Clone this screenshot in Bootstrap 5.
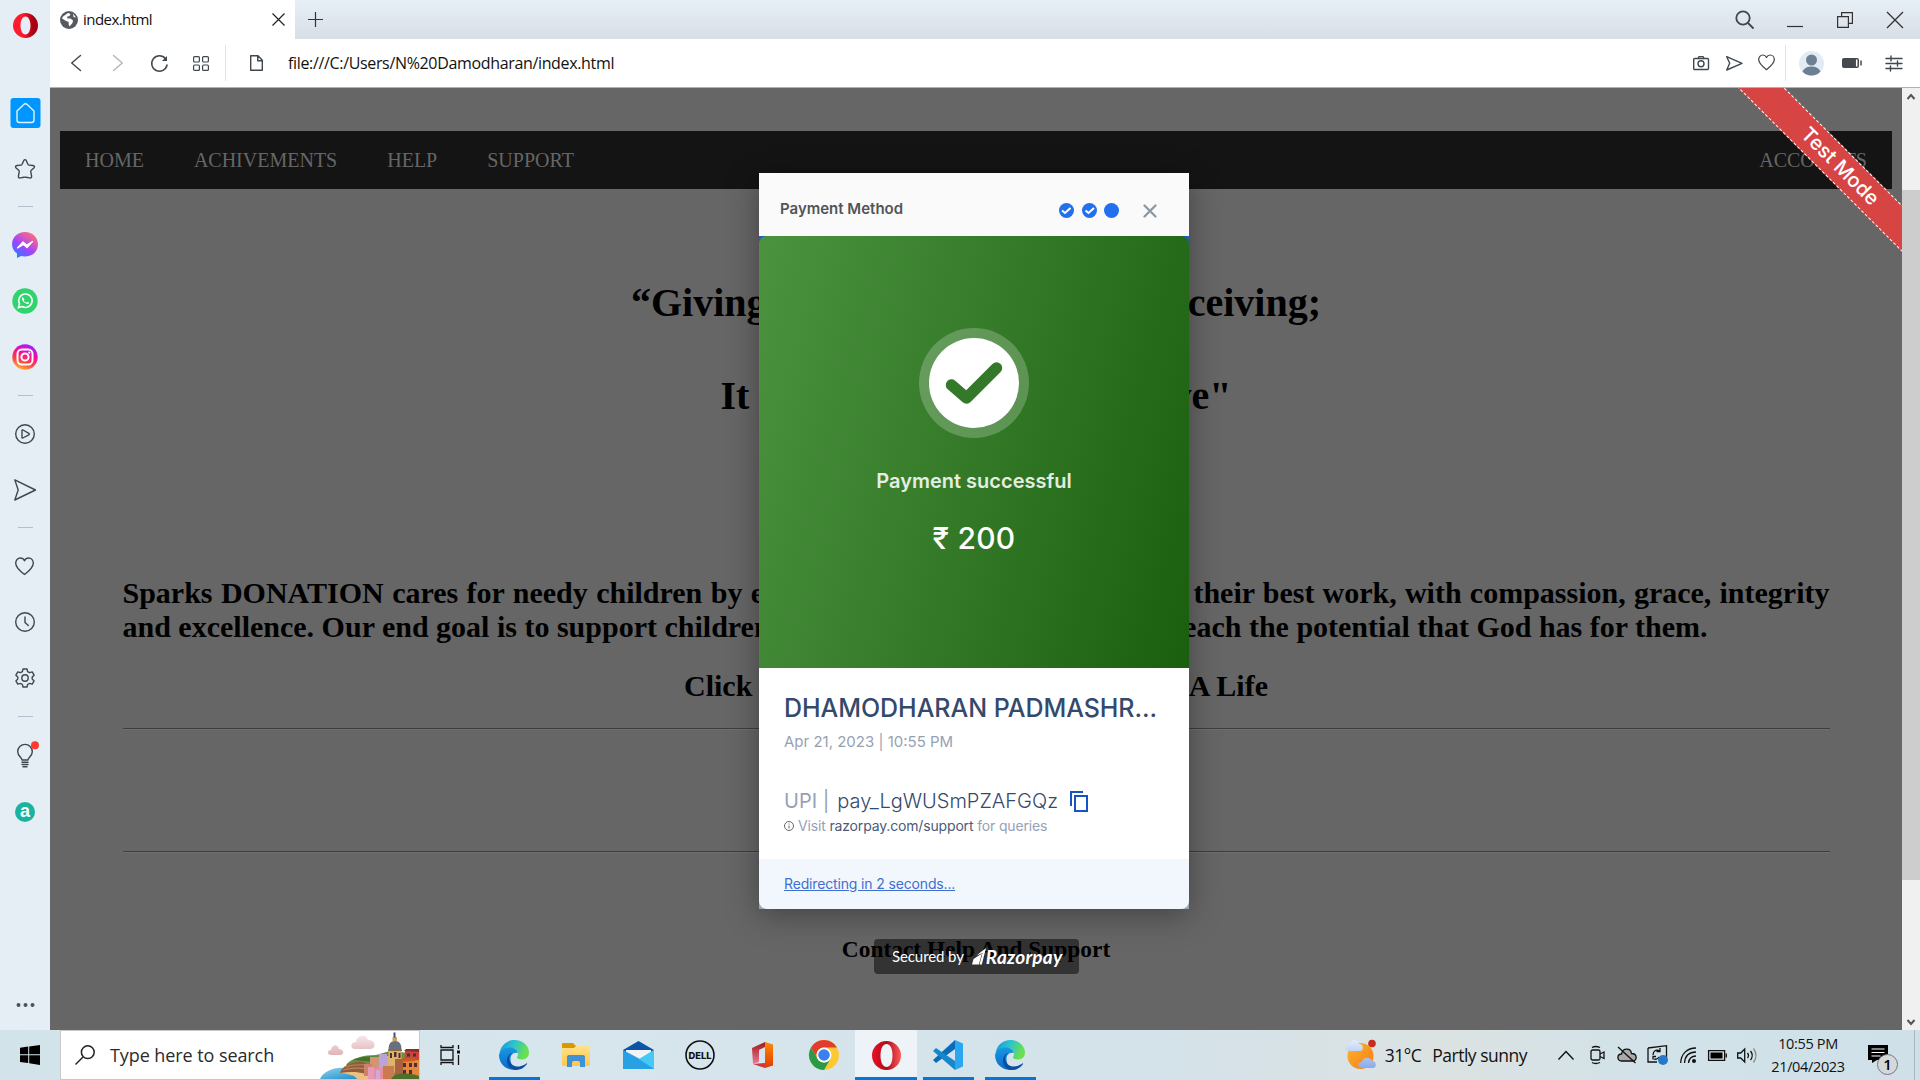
<!DOCTYPE html>
<html lang="en">
<head>
<meta charset="utf-8">
<title>index.html</title>
<link href="https://cdn.jsdelivr.net/npm/bootstrap@5.3.0/dist/css/bootstrap.min.css" rel="stylesheet">
<script src="https://cdn.jsdelivr.net/npm/bootstrap@5.3.0/dist/js/bootstrap.bundle.min.js"></script>
<style>
body{width:1920px;height:1080px;overflow:hidden;font-family:"Open Sans","Noto Sans",sans-serif;color:#111}
svg{display:block;flex:none;overflow:visible}
.ln{fill:none;stroke:#3f474f;stroke-width:1.4;stroke-linecap:round;stroke-linejoin:round}
.upper{height:1030px}
.side{width:50px;background:#e5edf5;padding-right:1px}
.side-logo{height:84.5px;padding:13px 0 0 2px}
.side-item{height:56px}
.side-rule{height:20.5px}
.side-rule i{width:15px;height:1px;margin-left:2px;background:#b3bfcc}
.tabs-row{height:39px;background:linear-gradient(#e5edf5 10%,#d8dee6)}
.tab-on{width:245px;background:#fff;padding:0 10px 0 10px;font-size:15px;letter-spacing:-.55px}
.tabname{padding-left:5px}
.win-btns{padding-right:17px;column-gap:34px}
.tools{height:49px;background:#fff;border-bottom:1px solid #a9b4bf;padding:0 18px 0 21px}
.vr-line{width:1px;height:36px;background:#e2e5e8}
.addr{font-size:16px;letter-spacing:-.34px;color:#111}
.view{height:942px;background:#666}
.page{font-family:"Liberation Serif",serif;color:#000;padding:43px 10px 0}
.menu{height:58px;background:#141414;color:#666;font-size:20px;padding:0 25px;column-gap:50px}
.big{font-size:40px;font-weight:700;line-height:46px;margin:0 auto}
.para{font-size:30px;font-weight:700;line-height:34px;margin:0 62.5px}
.rule{height:2px;border-top:1px solid #3d3d3d;border-bottom:1px solid #707070;margin:0 62.5px}
.scroller{width:18px;background:#f0f0f0}
.thumb{height:690px;background:#cdcdcd}
.ribbon{left:1640px;top:62px;width:300px;height:33px;background:#d64444;color:#fff;border-top:1px dashed #fff;border-bottom:1px dashed #fff;transform:rotate(45deg);font:500 20px/31px Inter,sans-serif;text-align:center;z-index:3}
.pay{left:709px;top:85px;width:430px;height:736px;background:#1f5fc4;box-shadow:0 6px 30px rgba(0,0,0,.35);font-family:Inter,sans-serif;z-index:2}
.pay-head{height:63px;background:#fafafa;padding:0 32px 0 21px}
.pay-green{height:432px;border-radius:8px 8px 0 0;background:linear-gradient(105deg,#4c9340 0%,#1a5f0e 100%);color:#fff}
.pay-info{height:191px;background:#fff;padding:0 25px}
.pay-foot-wrap{height:50px;background:#98a7bd}
.pay-foot{height:50px;background:#f2f7fe;border-radius:0 0 8px 8px;padding:0 25px 2px;font-size:14px;letter-spacing:-.15px;color:#3f6fd0}
.nm{font-size:25px;font-weight:500;color:#344a6c;line-height:30px;padding-top:25px;white-space:nowrap;letter-spacing:-.05px}
.soft{color:#97a1b5}
.deep{color:#4a5b7b}
.light-deep{color:#344a6c}
.secured{left:824px;top:851px;width:205px;height:35px;background:rgba(0,0,0,.5);border-radius:4px;color:#fff;font-family:Lato,sans-serif;z-index:2;padding-left:18px}
.bar{height:50px;background:linear-gradient(90deg,#d3e3ea,#d7e6ed 30%,#d4e3ea 60%,#dce2e2 75%,#d2e2e8 85%,#cfe0e8)}
.seek{width:360px;background:#fff;border:1px solid #c8c8c8;padding-left:14px;font-size:18px;letter-spacing:-.08px;color:#2b2b2b}
.app{width:62px;height:50px;position:relative}
.app.run::after{content:"";position:absolute;left:6px;right:5px;bottom:0;height:3px;background:#0078d7}
.app.now{background:#edf3f6}
.app.now::after{left:0;right:0}
.wtxt{font-size:17.5px;letter-spacing:-.5px}
.clock{font-size:14.5px;line-height:23px;text-align:center;width:86px;letter-spacing:-.35px}
</style>
</head>
<body>
<svg width="0" height="0" class="position-absolute">
<defs>
<linearGradient id="eg1" x1="0" y1="0" x2="1" y2=".3"><stop offset="0" stop-color="#1c8fdc"/><stop offset=".5" stop-color="#2cc3d0"/><stop offset="1" stop-color="#6be04f"/></linearGradient>
<linearGradient id="eg2" x1="0" y1="0" x2="0" y2="1"><stop offset="0" stop-color="#1a96e2"/><stop offset="1" stop-color="#0a6ac9"/></linearGradient>
<linearGradient id="op1" x1="0" y1="0" x2="1" y2="0"><stop offset=".4" stop-color="#ff1b2d"/><stop offset=".8" stop-color="#a70014"/></linearGradient>
<linearGradient id="op2" x1="0" y1="0" x2="1" y2="0"><stop offset="0" stop-color="#e81123"/><stop offset=".5" stop-color="#b00a1a"/><stop offset="1" stop-color="#ff5a5a"/></linearGradient>
<linearGradient id="ms" x1="0" y1="1" x2=".7" y2="0"><stop offset="0" stop-color="#0a8cff"/><stop offset=".5" stop-color="#a044ff"/><stop offset="1" stop-color="#ff6a80"/></linearGradient>
<linearGradient id="ig" x1=".2" y1="1" x2=".6" y2="0"><stop offset="0" stop-color="#ffc52e"/><stop offset=".35" stop-color="#ff4040"/><stop offset=".65" stop-color="#f0119a"/><stop offset="1" stop-color="#a51cff"/></linearGradient>
<linearGradient id="of" x1="0" y1="0" x2="0" y2="1"><stop offset="0" stop-color="#ff8a00"/><stop offset="1" stop-color="#e03a00"/></linearGradient>
<linearGradient id="of2" x1="0" y1="0" x2="0" y2="1"><stop offset="0" stop-color="#a01818"/><stop offset="1" stop-color="#f07a98"/></linearGradient>
<linearGradient id="fo" x1="0" y1="0" x2="0" y2="1"><stop offset="0" stop-color="#ffe08a"/><stop offset="1" stop-color="#fcc84a"/></linearGradient>
<linearGradient id="sea" x1="0" y1="0" x2="1" y2="1"><stop offset="0" stop-color="#8fd3ee"/><stop offset="1" stop-color="#0d86c4"/></linearGradient>
<linearGradient id="sun" x1="0" y1="0" x2="1" y2="1"><stop offset="0" stop-color="#ffb52c"/><stop offset="1" stop-color="#f47b17"/></linearGradient>
<linearGradient id="cl" x1="0" y1="0" x2="0" y2="1"><stop offset="0" stop-color="#e3edfc"/><stop offset="1" stop-color="#88abe8"/></linearGradient>
<linearGradient id="pk" x1="0" y1="0" x2="0" y2="1"><stop offset="0" stop-color="#f6e6e8"/><stop offset="1" stop-color="#dfb4ba"/></linearGradient>
<g id="edge">
<path d="M.5 13C2 5 8 0 15.500 0 24 0 30 6 30 12.500c0 4.500-3.200 7-7 7-2.800 0-5-.8-5-2 0-.8 1-1.500 1-3.500C19 10.500 16 8 12 8 7 8 3 10 .5 13z" fill="url(#eg1)"/>
<path d="M0 15c1-4.500 5-7.500 10.500-7.500 5 0 8 2.500 8.500 5.500-5-1.500-7.500 2-7.500 6 0 4.500 2.500 9 6.500 10.500C8.500 31.500 0 24.500 0 15z" fill="url(#eg2)"/>
<path d="M13.500 13c-3.500 2-4.200 5.500-2.500 9 2.500 5 9 6.500 16.300 1.500.6-.4 1.100 0 .7.600C25 28.500 20.500 30.500 16 30 8.500 29 6 20.500 9.500 15.500c1-1.400 2.500-2.300 4-2.500z" fill="#0c4da0"/>
</g>
<path id="heart" d="M9.500 17.500C3 12.500 .7 9.800 .7 6.200.7 3.200 2.800 1 5.300 1 7.200 1 8.700 2 9.500 3.800 10.300 2 11.800 1 13.700 1c2.500 0 4.600 2.200 4.600 5.200 0 3.600-2.300 6.300-8.800 11.300z"/>
</defs>
</svg>

<div class="upper d-flex">
<!-- browser sidebar -->
<aside class="side d-flex flex-column align-items-center">
<div class="side-logo"><svg width="25" height="25" viewBox="0 0 25 25"><path fill-rule="evenodd" fill="url(#op1)" d="M12.500 0a12.500 12.500 0 1 0 0 25 12.500 12.500 0 0 0 0-25zm0 3.500c3 0 5 4 5 9s-2 9-5 9-5-4-5-9 2-9 5-9z"/></svg></div>
<div class="side-item d-flex align-items-center"><svg width="30" height="30"><rect x=".5" width="30" height="30" rx="3" fill="#0096ff"/><path d="M7 13 13.500 6.700q2-1.800 4 0L24 13v9q0 2.500-2.500 2.500h-12Q7 24.500 7 22z" fill="none" stroke="#e5f3ff" stroke-width="1.400"/></svg></div>
<div class="side-item d-flex align-items-center"><svg width="20" height="20" viewBox="0 0 20 20" class="ln"><path d="M10 .6c.8 0 1 .5 1.300 1.100l1.600 3.500q.4.800 1.300.9l3.700.4c1.600.2 2.100 1.300 1 2.400l-2.600 2.400q-.7.600-.5 1.500l.8 4.300c.2 1.500-.6 2.200-2 1.800l-3.600-.7q-1-.2-2 0l-3.600.7c-1.400.4-2.200-.3-2-1.800l.8-4.300q.2-.9-.5-1.500L1.100 8.900c-1.100-1.100-.6-2.200 1-2.400l3.700-.4q.9-.1 1.300-.9l1.600-3.500C9 1.100 9.200.6 10 .6z"/></svg></div>
<div class="side-rule d-flex align-items-center"><i></i></div>
<div class="side-item d-flex align-items-center"><svg width="26" height="26" viewBox="0 0 26 26"><path d="M13 0c7.300 0 13 5.300 13 12.200S20.500 24.500 13 24.500c-1.300 0-3-.2-4-.5L5 26v-4.500C2 19.500 0 16 0 12.200 0 5.300 5.700 0 13 0z" fill="url(#ms)"/><path d="m5.500 16 5.500-6 3.500 3 6-3.500-5.500 6-3.500-3z" fill="#fff" stroke="#fff" stroke-width="1.200" stroke-linejoin="round"/></svg></div>
<div class="side-item d-flex align-items-center"><svg width="26" height="26" viewBox="0 0 26 26"><circle cx="13" cy="13" r="12.700" fill="#30d36c"/><path d="m6.500 19.500 1-3.700a6.700 6.700 0 1 1 2.600 2.700z" fill="none" stroke="#fff" stroke-width="1.600"/><path d="M10.500 9c-1.500 1.500 0 4 1.800 5.500s4 2.300 5 .5l-2-1.300-1.200 1c-1-.4-2-1.400-2.400-2.400l.8-1z" fill="#fff"/></svg></div>
<div class="side-item d-flex align-items-center"><svg width="26" height="26" viewBox="0 0 26 26"><circle cx="13" cy="13" r="12.700" fill="url(#ig)"/><g fill="none" stroke="#fff" stroke-width="2"><rect x="5.500" y="5.500" width="15" height="15" rx="4.300"/><circle cx="13" cy="13" r="3.600"/></g><circle cx="17.300" cy="8.700" r="1.100" fill="#fff"/></svg></div>
<div class="side-rule d-flex align-items-center"><i></i></div>
<div class="side-item d-flex align-items-center"><svg width="20" height="20" viewBox="0 0 20 20" class="ln"><circle cx="10" cy="10" r="9.300"/><path d="M7 6.500v7q0 .8.800.5l6-3.200q1-.8 0-1.500L8 6q-1-.4-1 .5z"/></svg></div>
<div class="side-item d-flex align-items-center"><svg width="22" height="22" viewBox="0 0 22 22" class="ln"><path d="M.8.900 21.500 11 .8 21l3.400-10z"/></svg></div>
<div class="side-rule d-flex align-items-center"><i></i></div>
<div class="side-item d-flex align-items-center"><svg width="19" height="18" class="ln"><use href="#heart"/></svg></div>
<div class="side-item d-flex align-items-center"><svg width="20" height="20" viewBox="0 0 20 20" class="ln"><circle cx="10" cy="10" r="9.300"/><path d="M10 5v5.500l3.300 3"/></svg></div>
<div class="side-item d-flex align-items-center"><svg width="20" height="20" viewBox="0 0 20 20" class="ln"><circle cx="10" cy="10" r="3.200"/><path d="M8 1h4l.6 2.600 2 1.100 2.600-.8 1.900 3.300-1.900 1.900v2l1.900 1.800-1.900 3.300-2.600-.8-2 1.100L12 19H8l-.6-2.500-2-1.100-2.600.8L.9 12.900l1.900-1.800v-2L.9 7.200l1.900-3.300 2.600.8 2-1.100z"/></svg></div>
<div class="side-rule d-flex align-items-center"><i></i></div>
<div class="side-item d-flex align-items-center"><svg width="16" height="24" viewBox="0 -1 16 24" class="ln"><path d="M5 16c0-2.500-4.300-4-4.300-8.300a7.300 7.300 0 0 1 14.600 0C15.300 12 11 13.500 11 16zM5 18.300h6M5 20.500h6M6 22.700h4"/><circle cx="18" cy="1.300" r="4" fill="#ff3b2f" stroke="none"/></svg></div>
<div class="side-item d-flex align-items-center"><svg width="20" height="20" viewBox="0 -1 20 20"><circle cx="10" cy="10" r="10" fill="#19b3a0"/><text x="10" y="15" text-anchor="middle" font-family="Liberation Sans" font-weight="700" font-size="18" fill="#fff">a</text></svg></div>
<div class="mt-auto" style="padding-bottom:23px"><svg width="18" height="4"><g fill="#4a545e"><circle cx="2.500" cy="2" r="2"/><circle cx="9.500" cy="2" r="2"/><circle cx="16.500" cy="2" r="2"/></g></svg></div>
</aside>

<div class="flex-grow-1">
<!-- tab strip -->
<div class="tabs-row d-flex">
<div class="tab-on d-flex align-items-center"><svg width="18" height="18" viewBox="0 0 18 18"><circle cx="9" cy="9" r="9" fill="#555a60"/><path d="M3 5.500 8 2l2.500 1-1 2-2.500.8.500 1.700h3l2.500 2-.5 2.500-3 3.500-1-2.500.3-2L6 10 2 7.500zM13 2.500l3 4-2.500-.5z" fill="#fff"/></svg><span class="tabname">index.html</span><svg class="ms-auto" width="13" height="13"><path d="m.5.500 12 12m0-12-12 12" stroke="#222" stroke-width="1.200"/></svg></div>
<svg style="margin:12px 0 0 13px" width="15" height="15"><path d="M7.500 0v15M0 7.500h15" stroke="#333" stroke-width="1.200"/></svg>
<div class="win-btns ms-auto d-flex align-items-center">
<svg width="18" height="18" class="ln" style="stroke-width:1.800"><circle cx="8" cy="7" r="6.700"/><path d="m13 12 5 5"/></svg>
<svg width="16" height="16"><path d="M0 14.500h16" stroke="#333" stroke-width="1.200"/></svg>
<svg width="16" height="16"><path d="M.6 4.600h10.800v10.800H.6zM4.600 4.600v-4h10.800v10.800h-4" fill="none" stroke="#333" stroke-width="1.200"/></svg>
<svg width="16" height="16"><path d="m0 0 16 16M16 0 0 16" stroke="#333" stroke-width="1.300"/></svg>
</div>
</div>
<!-- address row -->
<div class="tools d-flex align-items-center">
<svg width="10" height="16" class="ln"><path d="M9.500.500.700 8l8.800 7.500"/></svg>
<svg width="10" height="16" class="ln" style="margin-left:32px;opacity:.4"><path d="M.5.500 9.300 8 .5 15.500"/></svg>
<svg width="17" height="17" viewBox="0 0 17 17" class="ln" style="margin-left:28px;stroke-width:1.500"><path d="M14.500 3.800A7.700 7.700 0 1 0 16 10"/><path d="M16 1v5h-5z" fill="#3f474f" stroke="none"/></svg>
<svg width="16" height="15" class="ln" style="margin-left:25px;stroke-width:1.200"><rect x=".6" y=".6" width="5.800" height="5.400" rx="1"/><rect x="9.600" y=".6" width="5.800" height="5.400" rx="1"/><rect x=".6" y="9" width="5.800" height="5.400" rx="1"/><rect x="9.600" y="9" width="5.800" height="5.400" rx="1"/></svg>
<div class="vr-line" style="margin-left:16px"></div>
<svg width="13" height="16" class="ln" style="margin-left:24px"><path d="M.7.700h7.300l4.300 4.500v10.100H.7zM7.700.700v5h4.600"/></svg>
<span class="addr" style="margin-left:25px">file:///C:/Users/N%20Damodharan/index.html</span>
<svg class="ms-auto ln" width="16" height="14"><rect x=".7" y="2.500" width="14.800" height="11" rx="1"/><path d="M5 2.500 6 .6h4l1 1.900"/><circle cx="8" cy="7.700" r="3"/></svg>
<svg width="17" height="15" class="ln" style="margin-left:17px"><path d="M.7.700 16 7.300.7 14l3-6.700z"/></svg>
<svg width="17" height="16" viewBox="0 1 19 18" class="ln" style="margin-left:15px"><use href="#heart"/></svg>
<div class="vr-line" style="margin-left:10px"></div>
<svg width="25" height="25" style="margin-left:13px"><circle cx="12.500" cy="12.500" r="12.500" fill="#e1ebf4"/><circle cx="12.500" cy="9" r="5.500" fill="#6d7f93"/><path d="M3.500 20.500c2-4 5.500-5 9-5s7 1 9 5a12 12 0 0 1-18 0z" fill="#6d7f93"/></svg>
<svg width="20" height="10" style="margin-left:18px"><rect width="17" height="10" rx="2" fill="#444a4f"/><path d="M14.700 1.500v7" stroke="#fff" stroke-width="1.500"/><path d="M19 2.500v5" stroke="#444a4f" stroke-width="1.500"/></svg>
<svg width="16" height="15" style="margin-left:24px" class="ln"><path d="M0 2.500h16M0 7.500h16M0 12.500h16M5 0v5M11.500 5v5M4.500 10v5"/></svg>
</div>
<!-- viewport -->
<div class="d-flex">
<div class="view flex-grow-1 position-relative overflow-hidden">
<div class="page">
<nav class="menu d-flex align-items-center"><span>HOME</span><span>ACHIVEMENTS</span><span>HELP</span><span>SUPPORT</span><span class="ms-auto">ACCOUNTS</span></nav>
<div class="big d-flex justify-content-between" style="width:690px;margin-top:91px"><span>“Giving</span><span>Receiving;</span></div>
<div class="big d-flex justify-content-between" style="width:511px;margin-top:47px"><span>It</span><span>Give"</span></div>
<div class="para d-flex justify-content-between" style="margin-top:157px"><span style="word-spacing:.9px">Sparks DONATION cares for needy children by e</span><span style="word-spacing:.7px">their best work, with compassion, grace, integrity</span></div>
<div class="para d-flex justify-content-between" style="padding-right:122px"><span>and excellence. Our end goal is to support children</span><span>reach the potential that God has for them.</span></div>
<div class="para d-flex justify-content-between" style="width:584px;margin:25px auto 0"><span>Click</span><span>A Life</span></div>
<div class="rule" style="margin-top:25px"></div>
<div class="rule" style="margin-top:121px"></div>
<div class="text-center fw-bold" style="font-size:23.400px;line-height:27px;margin-top:83px">Contact Help And Support</div>
</div>
<div class="ribbon position-absolute">Test Mode</div>
<!-- payment dialog -->
<div class="pay position-absolute">
<div class="pay-head d-flex align-items-center"><span style="font-size:15px;font-weight:600;color:#515559;padding-top:9px">Payment Method</span>
<div class="ms-auto d-flex align-items-center" style="padding-top:12px;column-gap:7.500px">
<svg width="15" height="15"><circle cx="7.500" cy="7.500" r="7.500" fill="#2270ee"/><path d="m3 7.500 3 2.500 5.500-5" fill="none" stroke="#fff" stroke-width="2"/></svg>
<svg width="15" height="15"><circle cx="7.500" cy="7.500" r="7.500" fill="#2270ee"/><path d="m3.500 7.500 3 2.500 5.500-5" fill="none" stroke="#fff" stroke-width="2"/></svg>
<svg width="15" height="15"><circle cx="7.500" cy="7.500" r="7.500" fill="#2270ee"/></svg>
<svg width="14" height="14" style="margin:1px 0 0 16.500px"><path d="m1.500 1.500 11 11m0-11-11 11" stroke="#8e99a5" stroke-width="2.400" stroke-linecap="round"/></svg>
</div></div>
<div class="pay-green d-flex flex-column align-items-center">
<svg width="110" height="110" style="margin-top:92px"><circle cx="55" cy="55" r="55" fill="#fff" fill-opacity=".22"/><circle cx="55" cy="55" r="45" fill="#fff"/><path d="M32.500 57 47.500 70 77.500 40" fill="none" stroke="#34792a" stroke-width="11.500" stroke-linecap="round" stroke-linejoin="round"/></svg>
<div style="font-size:20px;font-weight:600;line-height:24px;margin-top:31px;opacity:.87">Payment successful</div>
<div style="font-size:30px;font-weight:500;line-height:36px;margin-top:27px;letter-spacing:.2px">₹ 200</div>
</div>
<div class="pay-info">
<div class="nm">DHAMODHARAN PADMASHR...</div>
<div class="soft" style="font-size:15px;line-height:20px;margin-top:9px">Apr 21, 2023 | 10:55 PM</div>
<div class="d-flex align-items-center" style="font-size:20px;line-height:26px;margin-top:36px"><span class="soft">UPI |</span><span class="light-deep" style="font-weight:300;padding-left:8px">pay_LgWUSmPZAFGQz</span><svg width="18" height="21" style="margin-left:12px"><path d="M1 15V1h12M5 5h12v15H5z" fill="none" stroke="#1553c6" stroke-width="2"/></svg></div>
<div class="d-flex align-items-center soft" style="font-size:14px;line-height:22px;margin-top:1px;letter-spacing:-.16px"><svg width="10" height="10"><circle cx="5" cy="5" r="4.500" fill="none" stroke="#666"/><path d="M5 4.500v3M5 2.500v1" stroke="#666"/></svg><span style="margin-left:4px">Visit <span class="deep">razorpay.com/support</span> for queries</span></div>
</div>
<div class="pay-foot-wrap"><div class="pay-foot d-flex align-items-center text-decoration-underline">Redirecting in 2 seconds...</div></div>
</div>
<div class="secured position-absolute d-flex align-items-center"><span style="font-size:15px;letter-spacing:-.1px">Secured by</span>
<svg width="14" height="17" viewBox="0 0 14 17" style="margin-left:8px"><path d="M0 16.500 1.500 11 10 5.500 6.800 16.500zM4.500 7.500 14 0 9.800 16.500H7.500L10.500 5z" fill="#fff"/></svg>
<span style="font-size:19px;font-weight:700;font-style:italic;line-height:20px;letter-spacing:.2px">Razorpay</span></div>
</div>
<div class="scroller d-flex flex-column">
<svg style="margin:6px 0 0 5px" width="8" height="6"><path d="m.5 5 3.500-4 3.500 4" fill="none" stroke="#555" stroke-width="2"/></svg>
<div class="thumb" style="margin-top:90px"></div>
<svg class="mt-auto" style="margin:0 0 5px 5px" width="8" height="6"><path d="m.5 1 3.500 4 3.500-4" fill="none" stroke="#555" stroke-width="2"/></svg>
</div>
</div>
</div>
</div>

<!-- taskbar -->
<div class="bar d-flex">
<div class="d-flex align-items-center justify-content-center" style="width:60px"><svg width="20" height="20"><path d="M0 2.800 8.200 1.600v7.700H0zM9.200 1.500 20 0v9.300H9.200zM0 10.300h8.200V18L0 16.900zM9.200 10.300H20V20L9.200 18.200z"/></svg></div>
<div class="seek d-flex align-items-center"><svg width="20" height="20" fill="none" stroke="#222" stroke-width="1.500"><circle cx="12.800" cy="7.200" r="6.400"/><path d="M8 12 .5 19.500"/></svg><span style="margin-left:15px">Type here to search</span>
<svg class="ms-auto" width="99" height="48" viewBox="1 0 99 48">
<path d="M12 24c-4 0-4-5 0-5 1-6 7-6 8-1 5 0 6 6 1 6zM36 18c-5 0-5-7 1-7 1-8 11-8 12-2 8-1 9 9 2 9z" fill="url(#pk)"/>
<path d="M27 34c5-7 18-10 30-10l14-4 29 3v25H40z" fill="#6c8f43"/><path d="M34 29c8-4 18-4 28-3l-4 5z" fill="#44702f"/>
<path d="M1 48c4-8 14-12 24-11l26 11z" fill="url(#sea)"/><path d="M21 42c3-8 13-12 24-11l10 9-4 5z" fill="#8f5c3e"/><path d="M26 36q9-3 22-2M24 39q10-3 25-1" stroke="#c08358" stroke-width="1.200" fill="none"/><path d="M21 42c14-2 28-1 31 6H38c-2-4-9-5-17-6z" fill="#ecc082"/>
<path d="M51 26h9v14h-9z" fill="#d39476"/><path d="M60 23h8v18h-8z" fill="#b9a3d8"/><path d="M68 25h9v17h-9z" fill="#d5b068"/><path d="M45 33h8v12h-8z" fill="#cf7f6a"/><path d="M49 36h6v12h-6z" fill="#e59bb5"/><path d="M55 37h9v11h-9z" fill="#e58f9c"/><path d="M57 39h4v9h-4z" fill="#cfa8e0"/><path d="M64 35h11v13H64z" fill="#cb7950"/>
<path d="M69.500 19h13v15h-13z" fill="#dcb56a"/><path d="M69.500 19c0-6 2-9 6.500-9s6.500 3 6.500 9z" fill="#6a6f80"/><path d="M73.500 6.500q2-2 4.500 0V10h-4.500z" fill="#cfa04f"/><path d="M74.500 1.500h2v5h-2z" fill="#40507c"/><path d="M69 18.500h14v1.500H69z" fill="#8a6d40"/>
<path d="M86 20h14v11H86z" fill="#c9443a"/><path d="m85 20 2-2h13v3z" fill="#8f2b2a"/><path d="M83 29h17v19H80z" fill="#e5873a"/><path d="M76 28h8v19h-8z" fill="#a9623f"/><path d="M79 31 84 27h12v3z" fill="#c75a26"/>
<path d="M71 22h2v5h-2zM75 21h2.500v5H75zM79.500 22h2v5h-2zM88 22.500h3v3h-3zM94 22.500h3v3h-3zM84 32h3v4h-3zM90 32h3v4h-3zM95 32h3v4h-3zM84 39h3v4h-3zM90 39h3v4h-3z" fill="#4f2d34"/>
<path d="M72 48c4-6 15-7 28-3v3z" fill="#4c6f2a"/></svg></div>
<div class="d-flex align-items-center justify-content-center" style="width:63px;padding-right:4px"><svg width="20" height="20" fill="none" stroke="#111" stroke-width="1.300"><path d="M1 5h12v10H1zM1 0v2.500h12V0M1 20v-2.500h12V20M18.500 0v4M18.500 10v10"/><path d="M17 5.500h3v3h-3z" fill="#111" stroke="none"/></svg></div>
<div class="app run d-flex align-items-center justify-content-center"><svg width="30" height="30"><use href="#edge"/></svg></div>
<div class="app d-flex align-items-center justify-content-center"><svg width="28" height="24"><path d="M0 1q0-1 1-1h10l3 3v5H0z" fill="#d99a00"/><path d="M0 5h12l2-2h13q1 0 1 1v18q0 1-1 1H1q-1 0-1-1z" fill="url(#fo)"/><path d="M5 24V14q0-2 2-2h14q2 0 2 2v10h-5v-4q0-2-2-2h-4q-2 0-2 2v4z" fill="#3f92d6"/></svg></div>
<div class="app d-flex align-items-center justify-content-center"><svg width="31" height="28"><path d="M0 9 15.500 0 31 9v4H0z" fill="#0a55a8"/><path d="M3 9h25v12H3z" fill="#f3f3f3"/><path d="M0 9v19h31V9L17 18z" fill="#2ba8ea"/><path d="M16 18 31 9v19z" fill="#47c9f7"/><path d="M0 9l31 19H0z" fill="#1d8fd8" opacity=".3"/></svg></div>
<div class="app d-flex align-items-center justify-content-center"><svg width="30" height="30"><circle cx="15" cy="15" r="14" fill="none" stroke="#111" stroke-width="1.600"/><text x="15" y="18.500" text-anchor="middle" font-family="Inter" font-weight="800" font-size="9.500" textLength="23" lengthAdjust="spacingAndGlyphs" fill="#111">DELL</text></svg></div>
<div class="app d-flex align-items-center justify-content-center"><svg width="21" height="26"><path d="M0 6 13 0v5L7 8v12l-6 2z" fill="url(#of2)"/><path d="M13 0 21 2.500v21L13 26z" fill="url(#of)"/><path d="M1 22l12-1v5z" fill="#d6343c"/></svg></div>
<div class="app d-flex align-items-center justify-content-center"><svg width="30" height="30" viewBox="0 0 30 30"><circle cx="15" cy="15" r="15" fill="#fcc934"/><path d="M2 7.500A15 15 0 0 1 28 7.500H15A7.500 7.500 0 0 0 8.500 18.700z" fill="#e33b2e"/><path d="M2 7.500A15 15 0 0 0 15 30l6.500-11.200A7.500 7.500 0 0 1 8.500 18.700z" fill="#2a9a48"/><circle cx="15" cy="15" r="7.500" fill="#fff"/><circle cx="15" cy="15" r="5.800" fill="#3b80ee"/></svg></div>
<div class="app run now d-flex align-items-center justify-content-center"><svg width="29" height="29" viewBox="0 0 29 29"><path fill-rule="evenodd" fill="url(#op2)" d="M14.500 0a14.500 14.500 0 1 0 0 29 14.500 14.500 0 0 0 0-29zm0 3c4 0 6 5 6 11.500S18.500 26 14.500 26s-6-5-6-11.500S10.500 3 14.500 3z"/></svg></div>
<div class="app run d-flex align-items-center justify-content-center"><svg width="30" height="30"><path d="M22 0v9L3 23l-3-3z" fill="#0b6cb8"/><path d="M22 30v-9L3 8l-3 3z" fill="#1588cc"/><path d="M22 0l8 3.500v23L22 30z" fill="#2aa7f0"/></svg></div>
<div class="app run d-flex align-items-center justify-content-center"><svg width="30" height="30"><use href="#edge"/></svg></div>
<div class="ms-auto d-flex align-items-center">
<svg width="32" height="30"><circle cx="15.500" cy="16" r="13" fill="url(#sun)"/><circle cx="27" cy="3.500" r="3.800" fill="#c92b1e"/><path d="M4 11c-5 0-4-6 0-6 1-6 9-6 10-1 5 0 5 7 1 7zM17 28c-5 0-5-6 0-6 1-6 9-5 10-1 5 0 5 7 1 7z" fill="url(#cl)"/></svg>
<span class="wtxt" style="margin-left:8px">31°C</span><span class="wtxt" style="margin-left:11px">Partly sunny</span>
<svg width="16" height="9" style="margin-left:31px" fill="none" stroke="#111" stroke-width="1.400"><path d="m.5 8.500 7.500-8 7.500 8"/></svg>
<svg width="15" height="18" style="margin-left:16px" fill="none" stroke="#111" stroke-width="1.300"><rect x="1" y="4" width="9" height="10" rx="1.500"/><path d="m10 8 4-2v6.500l-4-2M2 1.500Q5.500-.5 10 1.500M2 16.500q3.500 2 8 0"/></svg>
<svg width="20" height="16" style="margin-left:12px" fill="none" stroke="#111" stroke-width="1.300"><path d="M4.500 14C-.5 14 0 7 4.500 7 6 0 14 1 14.500 6.500c6 0 6 7.500 1 7.500z" fill="#aaa"/><path d="M1 0l17.500 16"/></svg>
<svg width="21" height="20" style="margin-left:10px" fill="none" stroke="#111" stroke-width="1.300"><path d="M1 3 19.500.700v12M1 3v14h9M6 10c0-4 3-6 7-4m0-3v3.500H9.500M7 14q3 1 5-2M6 14.500v-3h3"/><circle cx="16" cy="15" r="5" fill="#2878c8" stroke="none"/></svg>
<svg width="16" height="16" style="margin-left:12px" fill="none" stroke="#111" stroke-width="1.300"><path d="M.7 16C1 7 7 1 16 1M4.500 16C5 9 9 5 16 5M8.500 16c.5-4 3-7 7.500-7"/><circle cx="14" cy="14" r="2" fill="#111" stroke="none"/></svg>
<svg width="19" height="11" style="margin-left:12px"><path d="M.6.600h16v9.800H.6zM18.300 3.500v4" fill="none" stroke="#111" stroke-width="1.300"/><path d="M2.500 2.500h12v6h-12z"/></svg>
<svg width="20" height="17" style="margin-left:10px" fill="none" stroke="#111" stroke-width="1.300"><path d="M.7 6h3l4-4v13l-4-4h-3zM10.500 6q2 2.500 0 5M13.500 4q3.500 4.500 0 9"/><path d="M16.500 1.500q5 7 0 14" stroke="#888"/></svg>
<div class="clock" style="margin-left:8px"><div>10:55 PM</div><div>21/04/2023</div></div>
<svg width="30" height="30" style="margin-left:17px;margin-top:9px"><path d="M0 0h20v15H9l-5 3v-3H0z"/><path d="M3.500 4h13M3.500 7.500h13M3.500 11h9" stroke="#fff" stroke-width="1.200"/><circle cx="19.500" cy="19.500" r="10" fill="#d5d8da" stroke="#777"/><text x="19.500" y="25" text-anchor="middle" font-family="Open Sans" font-size="15" font-weight="600">1</text></svg>
<div style="width:1px;height:50px;background:#a9b6bd;margin:0 5px 0 16px"></div>
</div>
</div>
</body>
</html>
